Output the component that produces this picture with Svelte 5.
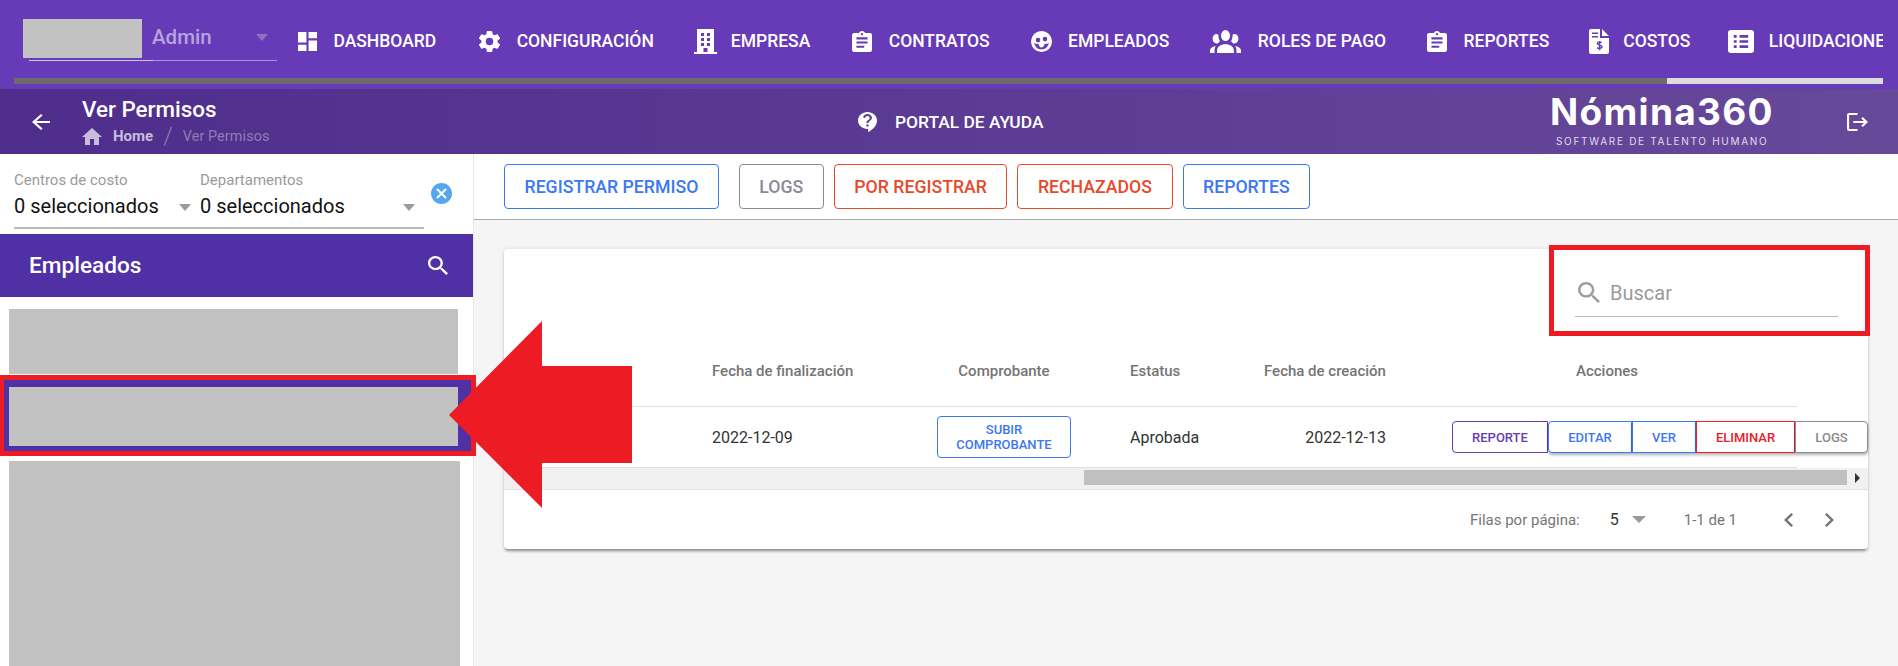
<script>
// Vista "Ver Permisos": cabecera, lista de empleados a la izquierda y tabla de permisos.
const navItems = [
  { label: 'DASHBOARD', w: 19, h: 19, vb: '3 3 18 18', d: 'M13,3V9H21V3M13,21H21V11H13M3,21H11V15H3M3,13H11V3H3V13Z' },
  { label: 'CONFIGURACIÓN', w: 21, h: 21, vb: '2.3 2 19.4 20', d: 'M12,15.5A3.5,3.5 0 0,1 8.5,12A3.5,3.5 0 0,1 12,8.5A3.5,3.5 0 0,1 15.5,12A3.5,3.5 0 0,1 12,15.5M19.43,12.97C19.47,12.65 19.5,12.33 19.5,12C19.5,11.67 19.47,11.34 19.43,11L21.54,9.37C21.73,9.22 21.78,8.95 21.66,8.73L19.66,5.27C19.54,5.05 19.27,4.96 19.05,5.05L16.56,6.05C16.04,5.66 15.5,5.32 14.87,5.07L14.5,2.42C14.46,2.18 14.25,2 14,2H10C9.75,2 9.54,2.18 9.5,2.42L9.13,5.07C8.5,5.32 7.96,5.66 7.44,6.05L4.95,5.05C4.73,4.96 4.46,5.05 4.34,5.27L2.34,8.73C2.21,8.95 2.27,9.22 2.46,9.37L4.57,11C4.53,11.34 4.5,11.67 4.5,12C4.5,12.33 4.53,12.65 4.57,12.97L2.46,14.63C2.27,14.78 2.21,15.05 2.34,15.27L4.34,18.73C4.46,18.95 4.73,19.03 4.95,18.95L7.44,17.94C7.96,18.34 8.5,18.68 9.13,18.93L9.5,21.58C9.54,21.82 9.75,22 10,22H14C14.25,22 14.46,21.82 14.5,21.58L14.87,18.93C15.5,18.67 16.04,18.34 16.56,17.94L19.05,18.95C19.27,19.03 19.54,18.95 19.66,18.73L21.66,15.27C21.78,15.05 21.73,14.78 21.54,14.63L19.43,12.97Z' },
  { label: 'EMPRESA', w: 23, h: 25, vb: '0 0 23 25', d: 'M3 0H20V23H23V25H0V23H3ZM7 4h3v3h-3zM13 4h3v3h-3zM7 9h3v3h-3zM13 9h3v3h-3zM7 14h3v3h-3zM13 14h3v3h-3zM9.5 19h4v4h-4z' },
  { label: 'CONTRATOS', w: 20, h: 21, vb: '3 1 18 20', d: 'M17,9H7V7H17M17,13H7V11H17M14,17H7V15H14M12,3A1,1 0 0,1 13,4A1,1 0 0,1 12,5A1,1 0 0,1 11,4A1,1 0 0,1 12,3M19,3H14.82C14.4,1.84 13.3,1 12,1C10.7,1 9.6,1.84 9.18,3H5A2,2 0 0,0 3,5V19A2,2 0 0,0 5,21H19A2,2 0 0,0 21,19V5C21,3.89 20.1,3 19,3Z' },
  { label: 'EMPLEADOS', w: 21, h: 21, vb: '1.5 1.5 21 21', d: 'M12 1.5a10.5 10.5 0 1 0 0 21a10.5 10.5 0 1 0 0-21ZM8.5 8.3a2.3 2.3 0 1 1 0 4.6a2.3 2.3 0 1 1 0-4.6ZM15.5 7.3a2.3 2.3 0 1 1 0 4.6a2.3 2.3 0 1 1 0-4.6ZM4.6 13.5c1.5 1 3.2 1.2 4.4 1c.5 2 1.5 3.5 3 3.5s2.5-1.5 3-3.5c1.2.2 2.9 0 4.4-1c-.8 3.7-3.8 6.5-7.4 6.5s-6.6-2.8-7.4-6.5Z' },
  { label: 'ROLES DE PAGO', w: 31, h: 23, vb: '0 5.5 24 14.5', d: 'M12,5.5A3.5,3.5 0 0,1 15.5,9A3.5,3.5 0 0,1 12,12.5A3.5,3.5 0 0,1 8.5,9A3.5,3.5 0 0,1 12,5.5M5,8C5.56,8 6.08,8.15 6.53,8.42C6.38,9.85 6.8,11.27 7.66,12.38C7.16,13.34 6.16,14 5,14A3,3 0 0,1 2,11A3,3 0 0,1 5,8M19,8A3,3 0 0,1 22,11A3,3 0 0,1 19,14C17.84,14 16.84,13.34 16.34,12.38C17.2,11.27 17.62,9.85 17.47,8.42C17.92,8.15 18.44,8 19,8M5.5,18.25C5.5,16.18 8.41,14.5 12,14.5C15.59,14.5 18.5,16.18 18.5,18.25V20H5.5V18.25M0,20V18.5C0,17.11 1.89,15.94 4.45,15.6C3.86,16.28 3.5,17.22 3.5,18.25V20H0M24,20H20.5V18.25C20.5,17.22 20.14,16.28 19.55,15.6C22.11,15.94 24,17.11 24,18.5V20Z' },
  { label: 'REPORTES', w: 20, h: 21, vb: '3 1 18 20', d: 'M17,9H7V7H17M17,13H7V11H17M14,17H7V15H14M12,3A1,1 0 0,1 13,4A1,1 0 0,1 12,5A1,1 0 0,1 11,4A1,1 0 0,1 12,3M19,3H14.82C14.4,1.84 13.3,1 12,1C10.7,1 9.6,1.84 9.18,3H5A2,2 0 0,0 3,5V19A2,2 0 0,0 5,21H19A2,2 0 0,0 21,19V5C21,3.89 20.1,3 19,3Z' },
  { label: 'COSTOS', w: 20, h: 25, vb: '0 0 20 25', d: 'M0 2a2 2 0 0 1 2-2H11V9H20V23a2 2 0 0 1-2 2H2a2 2 0 0 1-2-2ZM13 0L20 7H13ZM3 3.5h6V5H3ZM3 7h6v1.5H3Z', cut: 'M12.6 13.6c-1-.9-4.2-.9-4.2 1c0 2 4.6 1 4.6 3.2c0 1.8-3.6 1.8-4.9.8M10.6 12.2v9' },
  { label: 'LIQUIDACIONES', w: 26, h: 23, vb: '3 3 18 18', d: 'M19,3H5C3.9,3 3,3.9 3,5V19C3,20.1 3.9,21 5,21H19C20.1,21 21,20.1 21,19V5C21,3.9 20.1,3 19,3M7,7H9V9H7V7M7,11H9V13H7V11M7,15H9V17H7V15M17,17H11V15H17V17M17,13H11V11H17V13M17,9H11V7H17V9Z' }
];
const tools = [
  { label: 'REGISTRAR PERMISO', tone: 'blue' },
  { label: 'LOGS', tone: 'gray' },
  { label: 'POR REGISTRAR', tone: 'orange' },
  { label: 'RECHAZADOS', tone: 'orange' },
  { label: 'REPORTES', tone: 'blue' }
];
const actions = [
  { label: 'REPORTE', tone: 'purple' },
  { label: 'EDITAR', tone: 'blue' },
  { label: 'VER', tone: 'blue' },
  { label: 'ELIMINAR', tone: 'red' },
  { label: 'LOGS', tone: 'gray' }
];
const SEARCH = 'M15.5 14h-.79l-.28-.27C15.41 12.59 16 11.11 16 9.5 16 5.91 13.09 3 9.5 3S3 5.91 3 9.5 5.91 16 9.5 16c1.61 0 3.09-.59 4.23-1.57l.27.28v.79l5 4.99L20.49 19l-4.99-5zm-6 0C7.01 14 5 11.99 5 9.5S7.01 5 9.5 5 14 7.01 14 9.5 11.99 14 9.5 14z';
</script>

<div class="app">
  <header class="topbar">
    <div class="toprow">
      <div class="brand">
        <span class="redact"></span>
        <span class="admin">Admin</span>
        <span class="caret brand-caret"></span>
      </div>
      <nav class="nav">
        {#each navItems as item}
          <div class="nav-item">
            <svg class="nav-ico" width={item.w} height={item.h} viewBox={item.vb} preserveAspectRatio="none">
              <path fill="#fff" fill-rule="evenodd" d={item.d} />
              {#if item.cut}<path class="cut" d={item.cut} />{/if}
            </svg>
            <span>{item.label}</span>
          </div>
        {/each}
      </nav>
    </div>
    <div class="hscroll"><span class="hthumb"></span></div>
  </header>

  <div class="subbar">
    <svg class="back" width="18" height="16" viewBox="4 4 16 16" preserveAspectRatio="none"><path fill="#fff" d="M20 11H7.83l5.59-5.59L12 4l-8 8 8 8 1.41-1.41L7.83 13H20v-2z" /></svg>
    <div class="title-block">
      <div class="title">Ver Permisos</div>
      <div class="crumbs">
        <svg width="20" height="17" viewBox="2 3 20 17" preserveAspectRatio="none"><path fill="#c8bcdd" d="M10 20v-6h4v6h5v-8h3L12 3 2 12h3v8z" /></svg>
        <b>Home</b>
        <i>/</i>
        <span>Ver Permisos</span>
      </div>
    </div>
    <div class="help">
      <svg width="19" height="20" viewBox="3 2 17 20" preserveAspectRatio="none"><path fill="#fff" d="M11.5 2C6.81 2 3 5.81 3 10.5S6.81 19 11.5 19h.5v3c4.86-2.34 8-7 8-11.5C20 5.81 16.19 2 11.5 2zm1 14.5h-2v-2h2v2zm.4-4.78c-.01.01-.02.03-.03.05-.05.08-.1.16-.14.24-.02.03-.03.07-.04.11-.03.07-.06.14-.08.21-.07.21-.1.43-.1.68H10.5c0-.51.08-.94.2-1.3 0-.01 0-.02.01-.03.01-.04.04-.06.05-.1.06-.16.13-.3.22-.44.03-.05.07-.1.1-.15.03-.04.05-.09.08-.12l.01.01c.84-1.1 2.21-1.44 2.32-2.68.09-.98-.61-1.93-1.57-2.13-1.04-.22-1.98.39-2.3 1.28-.14.36-.47.65-.88.65h-.2c-.6 0-1.04-.59-.87-1.17.55-1.82 2.37-3.09 4.43-2.79 1.69.25 3.04 1.64 3.33 3.33.44 2.44-1.63 3.03-2.53 4.35z" /></svg>
      <span>PORTAL DE AYUDA</span>
    </div>
    <div class="logo">
      <div class="logo-name">Nómina360</div>
      <div class="logo-tag">SOFTWARE DE TALENTO HUMANO</div>
    </div>
    <svg class="exit" width="21" height="18" viewBox="2 3 20 18" preserveAspectRatio="none"><path fill="#fff" d="M17 7l-1.41 1.41L18.17 11H8v2h10.17l-2.58 2.58L17 17l5-5zM4 5h8V3H4c-1.1 0-2 .9-2 2v14c0 1.1.9 2 2 2h8v-2H4V5z" /></svg>
  </div>

  <div class="body">
    <aside class="side">
      <div class="filters">
        <div class="selects">
          <div class="field first">
            <label>Centros de costo</label>
            <div class="value">0 seleccionados<span class="caret"></span></div>
          </div>
          <div class="field second">
            <label>Departamentos</label>
            <div class="value">0 seleccionados<span class="caret"></span></div>
          </div>
        </div>
        <svg class="clear" width="21" height="21" viewBox="2 2 20 20"><path fill="#54a6ee" d="M12 2C6.47 2 2 6.47 2 12s4.47 10 10 10 10-4.47 10-10S17.53 2 12 2zm5 13.59L15.59 17 12 13.41 8.41 17 7 15.59 10.59 12 7 8.41 8.41 7 12 10.59 15.59 7 17 8.41 13.41 12 17 15.59z" /></svg>
      </div>
      <div class="emp-head">
        <span>Empleados</span>
        <svg width="20" height="19" viewBox="3 3 17.5 17.5" preserveAspectRatio="none"><path fill="#fff" d={SEARCH} /></svg>
      </div>
      <div class="emp-list">
        <div class="emp"></div>
        <div class="selected"><div class="emp inner"></div></div>
        <div class="emp last"></div>
      </div>
    </aside>

    <main class="main">
      <div class="tools">
        {#each tools as t}
          <button class={'tool ' + t.tone}>{t.label}</button>
        {/each}
      </div>

      <section class="card">
        <div class="card-top">
          <div class="search">
            <div class="search-line">
              <svg width="22" height="21" viewBox="3 3 17.5 17.5" preserveAspectRatio="none"><path fill="#9e9e9e" d={SEARCH} /></svg>
              <span>Buscar</span>
            </div>
          </div>
        </div>

        <div class="grid head">
          <div></div>
          <div>Fecha de finalización</div>
          <div class="comp">Comprobante</div>
          <div>Estatus</div>
          <div class="created">Fecha de creación</div>
          <div class="acc">Acciones</div>
        </div>
        <div class="grid row">
          <div></div>
          <div>2022-12-09</div>
          <div class="comp"><button class="upload">SUBIR<br />COMPROBANTE</button></div>
          <div>Aprobada</div>
          <div class="created end">2022-12-13</div>
          <div class="group">
            {#each actions as a}
              <button class={'act ' + a.tone}>{a.label}</button>
            {/each}
          </div>
        </div>

        <div class="track">
          <span class="thumb"></span>
          <span class="track-arrow"></span>
        </div>

        <div class="foot">
          <span>Filas por página:</span>
          <span class="rows">5</span>
          <span class="caret foot-caret"></span>
          <span class="range">1-1 de 1</span>
          <svg class="prev" width="9" height="14" viewBox="8 6 7.41 12" preserveAspectRatio="none"><path fill="#757575" d="M15.41 7.41L14 6l-6 6 6 6 1.41-1.41L10.83 12z" /></svg>
          <svg class="next" width="9" height="14" viewBox="8.59 6 7.41 12" preserveAspectRatio="none"><path fill="#757575" d="M10 6L8.59 7.41 13.17 12l-4.58 4.59L10 18l6-6z" /></svg>
        </div>
      </section>
    </main>
  </div>

  <!-- flecha de anotación sobre la captura -->
  <svg class="pointer" width="183" height="187" viewBox="0 0 183 187"><polygon fill="#ed1c24" points="0,94 93,0 93,45 183,45 183,142 93,142 93,187" /></svg>
</div>

<style>
:global(body) { margin: 0; background: #fff; }
.app {
  position: relative;
  width: 1898px;
  height: 666px;
  overflow: hidden;
  font-family: Roboto, "Noto Sans", sans-serif;
  display: flex;
  flex-direction: column;
}
button { font-family: inherit; background: #fff; cursor: pointer; }

/* barra superior */
.topbar { height: 89px; background: #673ab7; flex: none; }
.toprow { height: 78px; display: flex; }
.brand {
  position: relative;
  width: 248px;
  height: 41px;
  margin: 19px 0 0 29px;
  border-bottom: 1px solid rgba(255, 255, 255, .45);
  display: flex;
  align-items: center;
}
.brand::after {
  content: '';
  position: absolute;
  left: 0;
  bottom: -1px;
  width: 124px;
  height: 1px;
  background: #cfc4e6;
}
.redact { position: absolute; left: -6px; top: 0; width: 119px; height: 39px; background: #c2c2c2; z-index: 1; }
.admin { margin-left: 123px; color: #b7a4dd; font-size: 20.5px; font-weight: 500; margin-top: -5px; }
.caret { display: inline-block; width: 0; height: 0; border: 6px solid transparent; border-top: 7px solid #9a9a9a; border-bottom: 0; }
.brand-caret { position: absolute; left: 227px; top: 15px; border-top-color: #8c74c0; }
.nav { margin-left: 21px; width: 1585px; overflow: hidden; display: flex; gap: 41px; align-items: center; height: 82px; white-space: nowrap; }
.nav-item { display: flex; align-items: center; gap: 16.4px; color: #fff; font-size: 17.5px; font-weight: 500; flex: none; }
/* separaciones irregulares del menú original */
.nav-item:nth-child(2) { margin-left: 2px; }
.nav-item:nth-child(3) { margin-left: -1px; gap: 14px; }
.nav-item:nth-child(4) { margin-left: 1px; }
.nav-item:nth-child(8) { margin-left: -1px; gap: 14px; }
.nav-item:nth-child(9) { margin-left: -3.6px; gap: 15px; }
.cut { fill: none; stroke: #673ab7; stroke-width: 1.5; }
.hscroll { height: 6px; margin: 0 15px 0 14px; background: #6b6b6b; display: flex; justify-content: flex-end; }
.hthumb { width: 216px; background: #dcdcdc; }

/* subcabecera */
.subbar {
  height: 65px;
  flex: none;
  display: flex;
  align-items: center;
  background: linear-gradient(90deg, #4f2d8c, #67499a);
  color: #fff;
}
.back { margin-left: 32px; }
.title-block { margin-left: 32px; width: 776px; flex: none; }
.title { font-size: 22.4px; font-weight: 500; line-height: 24px; margin-top: 2px; }
.crumbs { display: flex; align-items: center; height: 24px; font-size: 15px; margin-top: 3px; color: #8f7db2; }
.crumbs b { margin-left: 11px; color: #c8bcdd; font-weight: 700; }
.crumbs i { margin: 0 10px; font-size: 24px; font-style: normal; font-weight: 300; }
.crumbs span { font-size: 14.4px; letter-spacing: .1px; }
.help { width: 694px; flex: none; display: flex; align-items: center; gap: 18px; font-size: 17.4px; font-weight: 500; }
.logo { width: 295px; flex: none; margin-top: -4px; }
.logo-name { font-family: Inter, "Open Sans", sans-serif; font-size: 37px; font-weight: 700; line-height: 38px; letter-spacing: 1.3px; margin-left: -2px; }
.logo-tag { font-family: Inter, "Open Sans", sans-serif; font-size: 10px; line-height: 12px; letter-spacing: 1.7px; margin: 4px 0 0 4px; color: #e2dced; }

/* cuerpo */
.body { flex: 1; display: flex; min-height: 0; }
.side { width: 473px; flex: none; border-right: 1px solid #e6e6e6; background: #fff; position: relative; z-index: 2; }
.filters { height: 80px; display: flex; }
.selects { width: 410px; height: 73px; margin-left: 14px; border-bottom: 2px solid #bbb; display: flex; }
.field { flex: none; }
.first { width: 186px; }
.second { width: 224px; }
.field label { display: block; margin-top: 16px; font-size: 15px; line-height: 20px; color: #9a9a9a; }
.value { margin-top: 4px; font-size: 20px; line-height: 24px; color: #111; position: relative; }
.value .caret { position: absolute; top: 10px; }
.first .caret { left: 165px; }
.second .caret { left: 203px; }
.clear { margin: 29px 0 0 7px; }
.emp-head {
  height: 63px;
  background: #5030a5;
  color: #fff;
  display: flex;
  align-items: center;
  justify-content: space-between;
  padding: 0 25px 0 29px;
  font-size: 22.6px;
  font-weight: 500;
}
.emp-list { padding: 12px 0 0 9px; }
.emp { width: 449px; height: 65px; background: #c2c2c2; }
.selected {
  margin: 6px 0 0 -5px;
  width: 467px;
  height: 71px;
  box-sizing: border-box;
  padding: 7px 0 0 5px;
  background: #5030a5;
  outline: 5px solid #ed1c24;
}
.inner { height: 59px; }
.last { width: 451px; height: 220px; margin-top: 10px; }

.main { flex: 1; background: #f5f5f5; min-width: 0; }
.tools {
  height: 66px;
  box-sizing: border-box;
  padding: 10px 0 0 30px;
  background: #fff;
  border-bottom: 1px solid #aaa;
  display: flex;
  gap: 10px;
}
.tool { height: 45px; padding: 0 19.5px; border: 1px solid; border-radius: 4px; font-size: 17.7px; font-weight: 500; }
.tool:first-child { margin-right: 10px; }
.tool.blue { color: #3b78f2; border-color: #3b78f2; }
.tool.gray { color: #8a8a99; border-color: #8a8a99; }
.tool.orange { color: #e64a2a; border-color: #e64a2a; }

/* tarjeta con tabla */
.card {
  width: 1364px;
  height: 300px;
  margin: 29px 0 0 30px;
  background: #fff;
  border-radius: 4px;
  box-shadow: 0 3px 3px -1px rgba(0, 0, 0, .4), 0 0 4px rgba(0, 0, 0, .12);
}
.card-top { height: 87px; display: flex; justify-content: flex-end; }
.search {
  width: 311px;
  height: 81px;
  margin: 1px 3px 0 0;
  box-sizing: border-box;
  padding: 28px 27px 0 21px;
  outline: 5px solid #ed1c24;
  position: relative;
  z-index: 1;
}
.search-line {
  height: 39px;
  box-sizing: border-box;
  border-bottom: 1px solid #bbb;
  display: flex;
  align-items: flex-start;
  gap: 10px;
  padding: 4px 0 0 3px;
  font-size: 20px;
  line-height: 22px;
  color: #9a9a9a;
}
.grid { display: grid; grid-template-columns: 208px 225px 193px 134px 188px 345px; width: 1293px; box-sizing: border-box; border-bottom: 1px solid #e0e0e0; align-items: center; }
.head { height: 71px; font-size: 15px; font-weight: 500; color: #757575; }
.row { height: 61px; font-size: 16px; color: #333; }
.comp { width: 134px; text-align: center; }
.created { width: 122px; white-space: nowrap; }
.end { text-align: right; }
.acc { padding-left: 124px; }
.upload { width: 134px; height: 42px; padding: 0; border: 1px solid #3b78f2; border-radius: 4px; color: #3b78f2; font-size: 13px; font-weight: 500; line-height: 15px; }
.group { display: flex; white-space: nowrap; }
.act { height: 32px; padding: 0; border: 1px solid; font-size: 13px; font-weight: 500; box-shadow: 0 2px 3px rgba(0, 0, 0, .3); flex: none; }
.act.purple { width: 96px; color: #673ab7; border-color: #673ab7; border-radius: 4px 0 0 4px; box-shadow: none; }
.act.blue { color: #3b78f2; border-color: #3b78f2; }
.act.red { width: 99px; color: #e8202a; border-color: #e8202a; }
.act.gray { width: 73px; color: #8a8a8a; border-color: #8a8a99; border-radius: 0 4px 4px 0; }
.group .act:nth-child(2) { width: 84px; border-radius: 4px 0 0 4px; }
.group .act:nth-child(3) { width: 64px; }

.track { height: 21px; box-sizing: border-box; padding: 2px 0 4px 580px; background: #f1f1f1; display: flex; align-items: stretch; position: relative; }
.thumb { width: 763px; background: #c0c0c0; }
.track-arrow { width: 0; height: 0; margin: 3px 0 0 8px; border: 5px solid transparent; border-left: 5px solid #333; border-right: 0; }
.foot {
  height: 60px;
  box-sizing: border-box;
  border-top: 1px solid #e0e0e0;
  display: flex;
  align-items: center;
  justify-content: flex-end;
  padding-right: 34px;
  font-size: 15px;
  color: #757575;
}
.rows { margin-left: 30px; font-size: 16px; color: #333; }
.foot-caret { margin-left: 13px; border-left-width: 7px; border-right-width: 7px; }
.range { margin-left: 38px; }
.prev { margin-left: 47px; }
.next { margin-left: 32px; }

.pointer { position: absolute; left: 449px; top: 321px; z-index: 3; }
</style>
